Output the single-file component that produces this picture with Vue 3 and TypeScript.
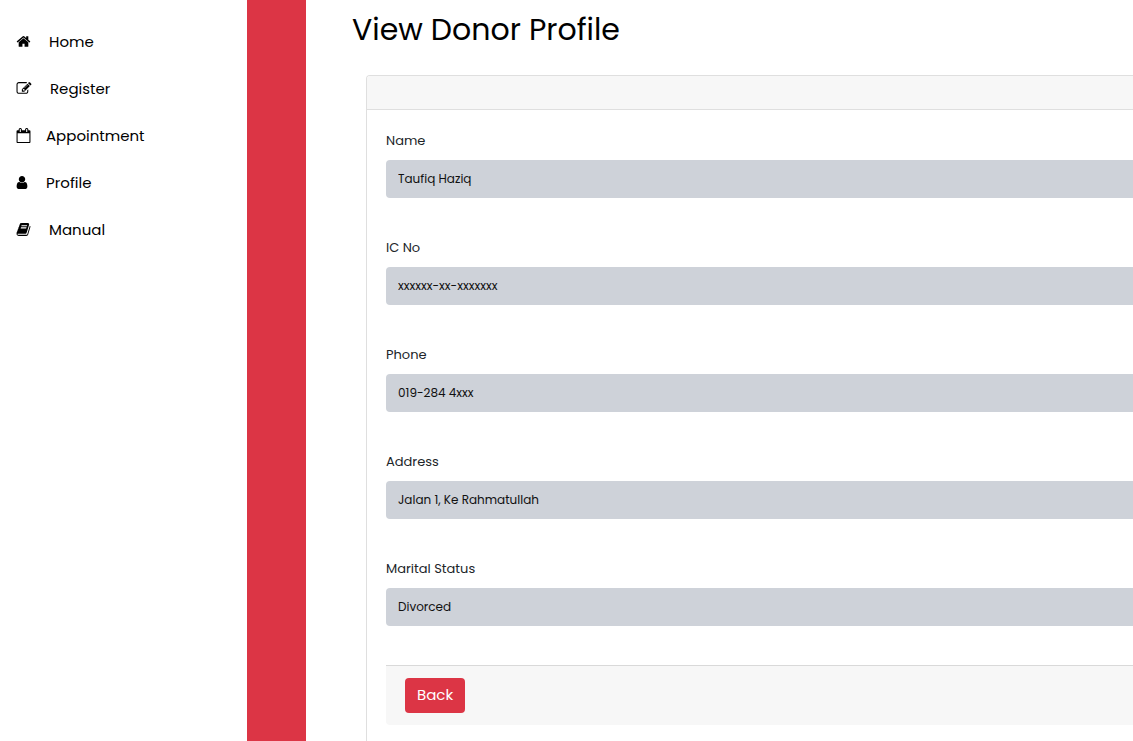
<script setup lang="ts">
interface NavItem {
  label: string
  viewBox: string
  width: number
  tight?: boolean
  path: string
}

interface Field {
  id: string
  label: string
  value: string
}

const navItems: NavItem[] = [
  {
    label: 'Home',
    viewBox: '64 0 1664 1792',
    width: 15,
    path: 'M1472 992v480q0 26-19 45t-45 19h-384v-384h-256v384h-384q-26 0-45-19t-19-45v-480q0-1 .5-3t.5-3l575-474 575 474q1 2 1 6zm223-69l-62 74q-8 9-21 11h-3q-13 0-21-7l-692-577-692 577q-12 8-24 7-13-2-21-11l-62-74q-8-10-7-23.5t11-21.5l719-599q32-26 76-26t76 26l244 204v-195q0-14 9-23t23-9h192q14 0 23 9t9 23v408l219 182q10 8 11 21.5t-7 23.5z',
  },
  {
    label: 'Register',
    viewBox: '0 0 1792 1792',
    width: 16,
    path: 'M888 1184l116-116-152-152-116 116v56h96v96h56zm440-720q-16-16-33 1l-350 350q-17 17-1 33t33-1l350-350q17-17 1-33zm80 594v190q0 119-84.5 203.5t-203.5 84.5h-832q-119 0-203.5-84.5t-84.5-203.5v-832q0-119 84.5-203.5t203.5-84.5h832q63 0 117 25 15 7 18 23 3 17-9 29l-49 49q-14 14-32 8-23-6-45-6h-832q-66 0-113 47t-47 113v832q0 66 47 113t113 47h832q66 0 113-47t47-113v-126q0-13 9-22l64-64q15-15 35-7t20 29zm-96-738l288 288-672 672h-288v-288zm444 132l-92 92-288-288 92-92q28-28 68-28t68 28l152 152q28 28 28 68t-28 68z',
  },
  {
    label: 'Appointment',
    viewBox: '64 0 1664 1792',
    width: 15,
    tight: true,
    path: 'M192 1664h1408v-1024h-1408v1024zm384-1216v-288q0-14-9-23t-23-9h-64q-14 0-23 9t-9 23v288q0 14 9 23t23 9h64q14 0 23-9t9-23zm768 0v-288q0-14-9-23t-23-9h-64q-14 0-23 9t-9 23v288q0 14 9 23t23 9h64q14 0 23-9t9-23zm384-64v1280q0 52-38 90t-90 38h-1408q-52 0-90-38t-38-90v-1280q0-52 38-90t90-38h128v-96q0-66 47-113t113-47h64q66 0 113 47t47 113v96h384v-96q0-66 47-113t113-47h64q66 0 113 47t47 113v96h128q52 0 90 38t38 90z',
  },
  {
    label: 'Profile',
    viewBox: '256 0 1280 1792',
    width: 12,
    path: 'M1536 1399q0 109-62.5 187t-150.5 78h-854q-88 0-150.5-78t-62.5-187q0-85 8.5-160.5t31.5-152 58.5-131 94-89 134.5-34.5q131 128 313 128t313-128q76 0 134.5 34.5t94 89 58.5 131 31.5 152 8.5 160.5zm-256-887q0 159-112.5 271.5t-271.5 112.5-271.5-112.5-112.5-271.5 112.5-271.5 271.5-112.5 271.5 112.5 112.5 271.5z',
  },
  {
    label: 'Manual',
    viewBox: '64 0 1664 1792',
    width: 15,
    path: 'M1703 478q40 57 18 129l-275 906q-19 64-76.5 107.5t-122.5 43.5h-923q-77 0-148.5-53.5t-99.5-131.5q-24-67-2-127 0-4 3-27t4-37q1-8-3-21.5t-3-19.5q2-11 8-21t16.5-23.5 16.5-23.5q23-38 45-91.5t30-91.5q3-10 .5-30t-.5-28q3-11 17-28t17-23q21-36 42-92t25-90q1-9-2.5-32t.5-28q4-13 22-30.5t22-22.5q19-26 42.5-84.5t27.5-96.5q1-8-3-25.5t-2-26.5q2-8 9-18t18-23 17-21q8-12 16.5-30.5t15-35 16-36 19.5-32 26.5-23.5 36-11.5 47.5 5.5l-1 3q38-9 51-9h761q74 0 114 56t18 130l-274 906q-36 119-71.5 153.5t-128.5 34.5h-869q-27 0-38 15-11 16-1 43 24 70 144 70h923q29 0 56-15.5t35-41.5l300-987q7-22 5-57 38 15 59 43zm-1064 2q-4 13 2 22.5t20 9.5h608q13 0 25.5-9.5t16.5-22.5l21-64q4-13-2-22.5t-20-9.5h-608q-13 0-25.5 9.5t-16.5 22.5zm-83 256q-4 13 2 22.5t20 9.5h608q13 0 25.5-9.5t16.5-22.5l21-64q4-13-2-22.5t-20-9.5h-608q-13 0-25.5 9.5t-16.5 22.5z',
  },
]

const fields: Field[] = [
  { id: 'name', label: 'Name', value: 'Taufiq Haziq' },
  { id: 'ic', label: 'IC No', value: 'xxxxxx-xx-xxxxxxx' },
  { id: 'phone', label: 'Phone', value: '019-284 4xxx' },
  { id: 'address', label: 'Address', value: 'Jalan 1, Ke Rahmatullah' },
  { id: 'marital', label: 'Marital Status', value: 'Divorced' },
]
</script>

<template>
  <div class="layout">
    <nav class="sidebar">
      <a
        v-for="item in navItems"
        :key="item.label"
        href="#"
        class="nav-link"
        :class="{ tight: item.tight }"
      >
        <svg :viewBox="item.viewBox" :width="item.width" height="15" aria-hidden="true">
          <path :d="item.path" />
        </svg>
        <span>{{ item.label }}</span>
      </a>
    </nav>
    <div class="stripe"></div>
    <main class="content">
      <h1 class="title">View Donor Profile</h1>
      <section class="card">
        <div class="card-header"></div>
        <form class="card-body" @submit.prevent>
          <div class="fields">
            <div v-for="field in fields" :key="field.id" class="field">
              <label :for="field.id">{{ field.label }}</label>
              <input :id="field.id" type="text" :value="field.value" readonly />
            </div>
          </div>
          <div class="card-footer">
            <button type="button" class="back">Back</button>
          </div>
        </form>
      </section>
    </main>
  </div>
</template>

<style>
body {
  margin: 0;
  background: #fff;
}
</style>

<style scoped>
.layout {
  display: flex;
  min-height: 100vh;
  font-family: Poppins, Inter, 'Liberation Sans', sans-serif;
  font-weight: 400;
  color: #000;
}

.sidebar {
  flex: 0 0 247px;
  box-sizing: border-box;
  padding-top: 18px;
}

.nav-link {
  display: flex;
  align-items: center;
  gap: 18px;
  height: 47px;
  padding-left: 16px;
  font-size: 15px;
  color: #000;
  text-decoration: none;
}

.nav-link.tight {
  gap: 15px;
}

.nav-link svg {
  fill: #000;
}

.stripe {
  flex: 0 0 59px;
  background: #dc3545;
}

.content {
  flex: 1;
  min-width: 0;
  display: flex;
  flex-direction: column;
}

.title {
  margin: 0 0 15px 46px;
  font-size: 30px;
  line-height: 60px;
  font-weight: 400;
}

.card {
  flex: 1;
  margin-left: 60px;
  border: 1px solid #dfdfdf;
  border-width: 1px 0 0 1px;
  border-radius: 4px 0 0 0;
}

.card-header {
  height: 33px;
  background: #f7f7f7;
  border-bottom: 1px solid #dfdfdf;
  border-radius: 3px 0 0 0;
}

.card-body {
  padding: 21px 0 16px 19px;
}

.fields {
  display: flex;
  flex-direction: column;
  gap: 40px;
  margin-bottom: 39px;
}

.field {
  display: flex;
  flex-direction: column;
  gap: 9px;
}

.field label {
  font-size: 13px;
  line-height: 20px;
  color: #212529;
}

.field input {
  box-sizing: border-box;
  width: 100%;
  height: 38px;
  padding: 0 12px;
  border: 0;
  border-radius: 4px 0 0 4px;
  background: #ced2d9;
  color: #111;
  font: inherit;
  font-size: 12px;
  outline: none;
}

.card-footer {
  padding: 12px 19px;
  background: #f7f7f7;
  border-top: 1px solid #d9d9d9;
  border-radius: 0 0 0 4px;
}

.back {
  display: block;
  height: 35px;
  padding: 0 12px 2px;
  border: 0;
  border-radius: 4px;
  background: #dc3545;
  color: #fff;
  font: inherit;
  font-size: 15px;
}
</style>
